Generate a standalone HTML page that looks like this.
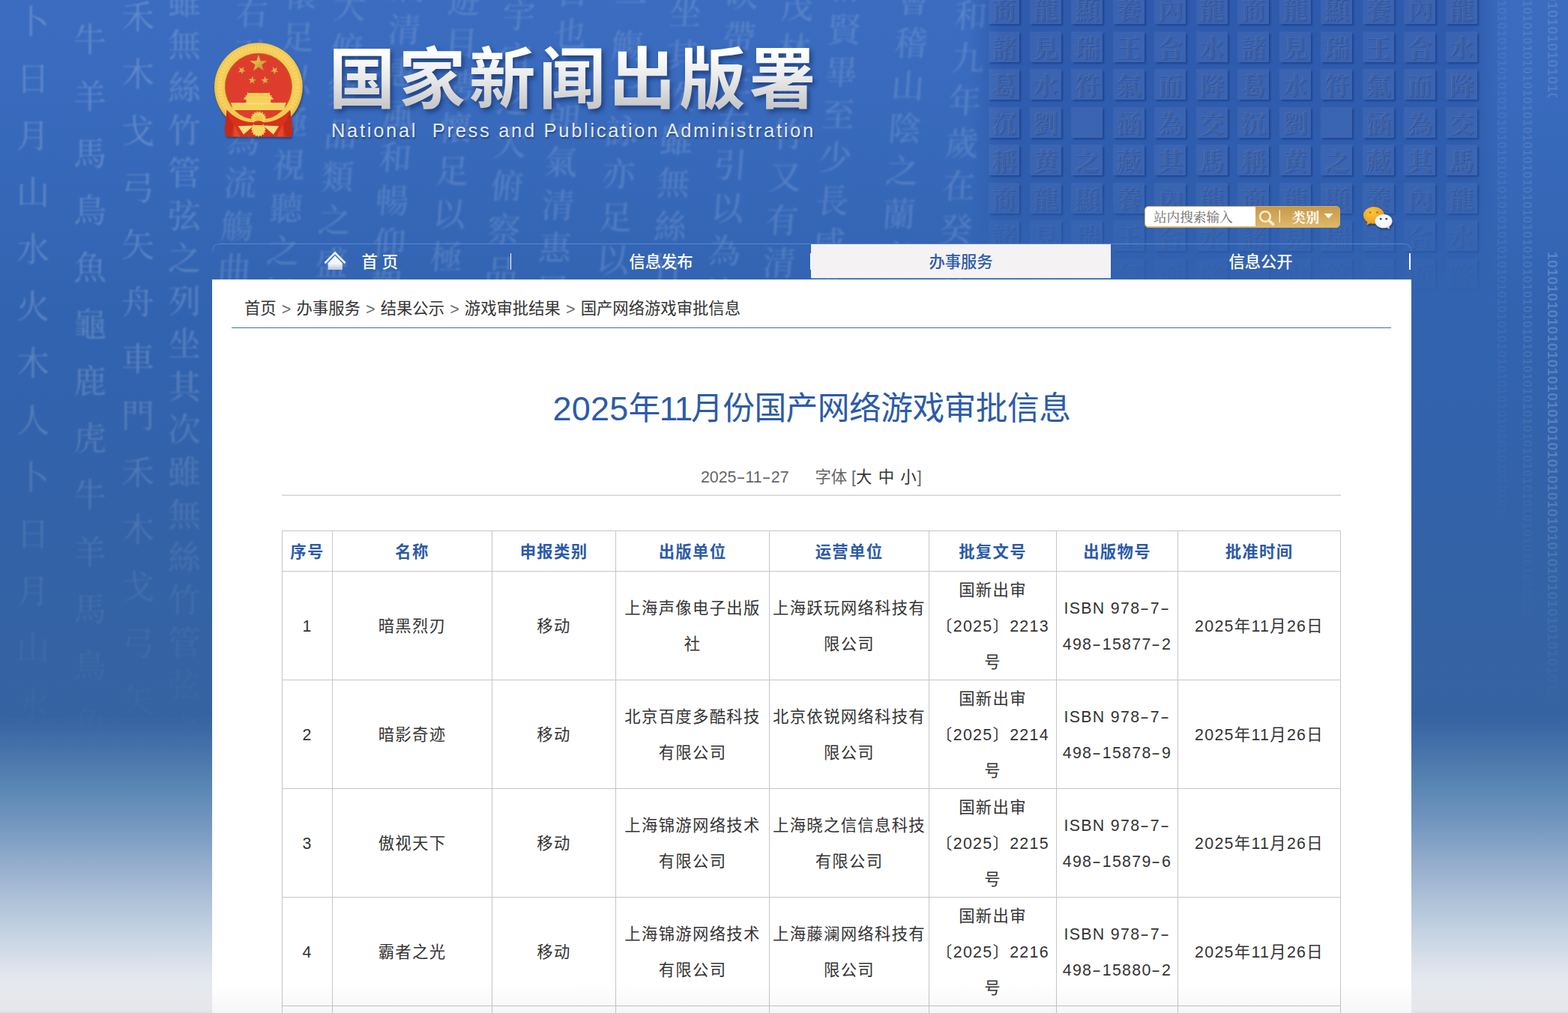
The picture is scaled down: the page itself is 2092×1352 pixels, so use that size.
<!DOCTYPE html>
<html lang="zh-CN">
<head>
<meta charset="utf-8">
<title>2025年11月份国产网络游戏审批信息</title>
<style>
*{box-sizing:border-box;margin:0;padding:0}
html,body{width:2092px;height:1352px;overflow:hidden}
body{position:relative;font-family:"Liberation Sans","Noto Sans CJK SC",sans-serif;color:#333;
background:linear-gradient(to bottom,#3b6cc0 0px,#3769bb 200px,#3263b0 420px,#3362a8 700px,#3563a2 955px,#4672aa 1000px,#5a86b3 1050px,#7497bf 1100px,#9cb3d0 1167px,#bfcfe0 1234px,#e2e6ee 1301px,#eeeff1 1348px,#e6e7ea 1352px);}
.abs{position:absolute}

/* decorative background */
#deco{left:0;top:0;width:2092px;height:1352px;overflow:hidden;pointer-events:none}
.cal{position:absolute;top:-6px;width:60px;writing-mode:vertical-rl;font-family:"Noto Serif CJK TC","Noto Serif CJK SC",serif;font-weight:500;font-size:44px;line-height:60px;letter-spacing:13px;color:rgba(255,255,255,.14);white-space:nowrap;filter:blur(1.1px);transform:skewX(-4deg)}
.orc{position:absolute;top:10px;width:60px;writing-mode:vertical-rl;font-family:"Noto Serif CJK TC","Noto Serif CJK SC",serif;font-weight:400;font-size:44px;line-height:60px;letter-spacing:32px;color:rgba(255,255,255,.2);white-space:nowrap;filter:blur(1px)}
#leftfade{left:0;top:0;width:283px;height:1100px;-webkit-mask-image:linear-gradient(to bottom,#000 0,#000 45%,rgba(0,0,0,.45) 70%,transparent 92%);mask-image:linear-gradient(to bottom,#000 0,#000 45%,rgba(0,0,0,.45) 70%,transparent 92%)}
#tiles{left:1319px;top:-8px;width:672px;height:410px;filter:blur(.7px);display:grid;grid-template-columns:repeat(12,41px);grid-auto-rows:40px;column-gap:14.5px;row-gap:10.5px;-webkit-mask-image:linear-gradient(to bottom,#000 0,#000 58%,rgba(0,0,0,.5) 78%,transparent 100%);mask-image:linear-gradient(to bottom,#000 0,#000 58%,rgba(0,0,0,.5) 78%,transparent 100%)}
#tiles b{display:block;background:rgba(255,255,255,.055);box-shadow:1.5px 2px 2px rgba(0,10,60,.28),-1px -1px 1px rgba(255,255,255,.05);font-family:"Noto Serif CJK TC","Noto Serif CJK SC",serif;font-weight:900;font-size:33px;line-height:38px;text-align:center;color:rgba(255,255,255,.075);overflow:hidden;text-shadow:1px 1px 1px rgba(0,10,60,.18)}
#tilebg{left:1295px;top:0;width:710px;height:400px;background:linear-gradient(to bottom,rgba(20,50,130,.3),rgba(20,50,130,.2) 60%,rgba(20,50,130,0));-webkit-mask-image:linear-gradient(to right,transparent 0,#000 6%,#000 94%,transparent 100%);mask-image:linear-gradient(to right,transparent 0,#000 6%,#000 94%,transparent 100%)}
.bin{position:absolute;overflow:hidden;height:20px;font-family:"Liberation Sans",sans-serif;font-weight:700;font-size:17px;line-height:20px;letter-spacing:.5px;color:rgba(255,255,255,.13);white-space:nowrap;transform-origin:0 0;transform:rotate(90deg)}
/* header */
#logo-cn{left:438.5px;top:39px;font-family:"Noto Sans CJK SC",sans-serif;font-weight:700;font-size:89px;letter-spacing:4.5px;line-height:120px;white-space:nowrap;color:#f0f0f0;
background:linear-gradient(to bottom,#ffffff 25%,#e9e9e9 55%,#c9c9c9 85%);-webkit-background-clip:text;background-clip:text;-webkit-text-fill-color:transparent;filter:drop-shadow(3px 4px 3px rgba(10,30,80,.55));}
#logo-en{left:442px;top:158px;font-size:25.5px;line-height:32px;white-space:nowrap;color:#e6eaf3;letter-spacing:2.7px;text-shadow:1px 2px 2px rgba(10,30,80,.5)}
/* search */
#search{left:1527px;top:275px;width:261px;height:29px;border-radius:5px;background:linear-gradient(to bottom,#c59a4a,#e0b868);border:1.5px solid #d9ae5c;overflow:hidden}
#search .inp{position:absolute;left:0;top:0;width:147px;height:26px;background:#fff;border-radius:4px 0 0 4px;font-family:"Liberation Serif","Noto Serif CJK SC",serif;font-size:17.6px;line-height:29px;color:#6a6a6a;padding-left:11px;white-space:nowrap}
#search .cat{position:absolute;left:195.5px;top:2px;font-size:18.4px;line-height:26px;color:#fff;font-family:"Liberation Serif","Noto Serif CJK SC",serif;font-weight:700}
/* nav */
#nav{left:283px;top:325px;width:1600px;height:16px;border-top:1.3px solid #5b88d0;border-radius:9px 9px 0 0;border-left:1.2px solid #5b88d0;border-right:1.2px solid #5b88d0;-webkit-mask-image:linear-gradient(to bottom,#000 35%,transparent 80%);mask-image:linear-gradient(to bottom,#000 35%,transparent 80%)}
.nv{position:absolute;top:326px;height:46px;width:400px;text-align:center;font-size:21.3px;font-weight:500;line-height:49px;color:#fff;white-space:nowrap}
.nv.act{background:#f5f2f4;color:#2d5ba5;border-bottom:1.3px solid #5b88d0}
.sep{position:absolute;top:338px;width:1.4px;height:22px;background:#fff}
/* content */
#main{left:283px;top:373px;width:1600px;height:979px;background:#fff}
#crumb{left:326px;top:392px;font-size:21.33px;line-height:40px;white-space:nowrap;color:#333}
#crumb span{margin:0 7.2px;color:#6a6a6a;position:relative;top:1px}
#crumbline{left:309px;top:436.6px;width:1547px;height:1.4px;background:#3f6db5}
#title{left:283px;width:1600px;top:510px;text-align:center;font-size:42.67px;line-height:70px;color:#2c5ba9;white-space:nowrap}
#title .d{font-size:45px;letter-spacing:.2px;position:relative;top:.5px}
#title .e{font-size:44px;letter-spacing:-1.2px;margin-right:-1px;margin-left:-1px;position:relative;top:.5px}
#title{letter-spacing:-.45px}
.meta{top:621px;font-size:21.33px;line-height:32px;color:#666;white-space:pre}
.meta b{font-weight:400;color:#333}
#hr{left:376px;top:660px;width:1413px;height:1.5px;background:#dcdcdc}
table{position:absolute;left:376px;top:708px;width:1413px;border-collapse:collapse;table-layout:fixed;font-size:21.33px;letter-spacing:1.33px;text-align:center}
td,th{border:1px solid #c6c6c6;line-height:48px;padding:0;vertical-align:middle;white-space:nowrap;color:#333;font-weight:400}
th{height:54px;color:#2b5aa8;font-weight:700;line-height:30px}
tr.r td{height:145px}
td i,th i{font-style:normal;display:block;position:relative;top:1px}
th i{top:1px}
.h{display:inline-block;transform:scaleX(1.7);margin:0 2.5px}
</style>
</head>
<body>
<div class="abs" id="deco">
<div class="cal" style="left:292px;top:-6px">右引以為流觴曲水</div>
<div class="cal" style="left:357px;top:-30px">懷足以極視聽之娛</div>
<div class="cal" style="left:422px;top:-14px">大俯察品類之盛所</div>
<div class="cal" style="left:499px;top:-40px">氣清惠風和暢仰觀</div>
<div class="cal" style="left:575px;top:-22px">遊目騁懷足以極視</div>
<div class="cal" style="left:648px;top:-2px">宇宙之大俯察品類</div>
<div class="cal" style="left:720px;top:-34px">日也天朗氣清惠風</div>
<div class="cal" style="left:797px;top:-18px">一觴一詠亦足以暢</div>
<div class="cal" style="left:870px;top:-6px">坐其次雖無絲竹管</div>
<div class="cal" style="left:946px;top:-30px">映帶左右引以為流</div>
<div class="cal" style="left:1019px;top:-14px">茂林脩竹又有清流</div>
<div class="cal" style="left:1086px;top:-40px">群賢畢至少長咸集</div>
<div class="cal" style="left:1175px;top:-22px">會稽山陰之蘭亭脩</div>
<div class="cal" style="left:1251px;top:-2px">和九年歲在癸丑暮</div>
<div class="abs" id="leftfade">
<div class="cal" style="left:216px;top:-20px;transform:none;color:rgba(255,255,255,.17)">雖無絲竹管弦之列坐其次雖無絲竹管弦之盛</div>
<div class="orc" style="left:14px;top:6px">卜日月山水火木人卜日月山水火</div>
<div class="orc" style="left:90px;top:30px">牛羊馬鳥魚龜鹿虎牛羊馬鳥魚龜</div>
<div class="orc" style="left:154px;top:0px">禾木戈弓矢舟車門禾木戈弓矢舟</div>
</div>
<div class="abs" id="tilebg"></div>
<div class="bin" style="left:2081px;top:336px;width:620px;font-size:19px;color:rgba(255,255,255,.2);-webkit-mask-image:linear-gradient(to right,#000 40%,transparent);mask-image:linear-gradient(to right,#000 40%,transparent)">101010101010101010101010101010101010101010101010101010101010101010101010101010101010101010101010101010101010101010101010</div>
<div class="bin" style="left:2081px;top:-20px;width:150px;font-size:19px;color:rgba(255,255,255,.14)">101010101010101010101010101010101010101010101010101010101010101010101010101010101010101010101010101010101010101010101010</div>
<div class="bin" style="left:2047px;top:-20px;width:900px;color:rgba(255,255,255,.1);-webkit-mask-image:linear-gradient(to right,#000 50%,transparent);mask-image:linear-gradient(to right,#000 50%,transparent)">101010101010101010101010101010101010101010101010101010101010101010101010101010101010101010101010101010101010101010101010</div>
<div class="bin" style="left:2013px;top:-20px;width:800px;color:rgba(255,255,255,.065);-webkit-mask-image:linear-gradient(to right,#000 50%,transparent);mask-image:linear-gradient(to right,#000 50%,transparent)">101010101010101010101010101010101010101010101010101010101010101010101010101010101010101010101010101010101010101010101010</div>
<div class="abs" id="tiles"><b>商</b><b>龍</b><b>顯</b><b>養</b><b>內</b><b>龍</b><b>商</b><b>龍</b><b>顯</b><b>養</b><b>內</b><b>龍</b><b>諸</b><b>見</b><b>瑞</b><b>王</b><b>合</b><b>水</b><b>諸</b><b>見</b><b>瑞</b><b>王</b><b>合</b><b>水</b><b>葛</b><b>水</b><b>符</b><b>氣</b><b>而</b><b>降</b><b>葛</b><b>水</b><b>符</b><b>氣</b><b>而</b><b>降</b><b>沉</b><b>劉</b><b>　</b><b>涵</b><b>為</b><b>交</b><b>沉</b><b>劉</b><b>　</b><b>涵</b><b>為</b><b>交</b><b>稱</b><b>黄</b><b>之</b><b>藏</b><b>其</b><b>馬</b><b>稱</b><b>黄</b><b>之</b><b>藏</b><b>其</b><b>馬</b><b>商</b><b>龍</b><b>顯</b><b>養</b><b>內</b><b>龍</b><b>商</b><b>龍</b><b>顯</b><b>養</b><b>內</b><b>龍</b><b>諸</b><b>見</b><b>瑞</b><b>王</b><b>合</b><b>水</b><b>諸</b><b>見</b><b>瑞</b><b>王</b><b>合</b><b>水</b><b>葛</b><b>水</b><b>符</b><b>氣</b><b>而</b><b>降</b><b>葛</b><b>水</b><b>符</b><b>氣</b><b>而</b><b>降</b></div>
</div>
<svg class="abs" id="emblem" style="left:275px;top:45px" width="140" height="150" viewBox="0 0 1262 1352">
<defs>
<radialGradient id="gold" cx="50%" cy="45%" r="55%"><stop offset="0" stop-color="#f6d060"/><stop offset=".8" stop-color="#f4cb52"/><stop offset=".93" stop-color="#f1c244"/><stop offset="1" stop-color="#dfa62e"/></radialGradient>
<linearGradient id="stg" x1="0" y1="0" x2="1" y2="1"><stop offset="0" stop-color="#f3d869"/><stop offset="1" stop-color="#b98d1f"/></linearGradient>
<filter id="esh" x="-20%" y="-20%" width="140%" height="140%"><feGaussianBlur in="SourceAlpha" stdDeviation="14"/><feOffset dx="6" dy="14"/><feComponentTransfer><feFuncA type="linear" slope=".4"/></feComponentTransfer><feMerge><feMergeNode/><feMergeNode in="SourceGraphic"/></feMerge></filter>
</defs>
<g filter="url(#esh)">
<circle cx="630" cy="640" r="530" fill="url(#gold)"/>
<circle cx="630" cy="640" r="470" fill="none" stroke="#f8dc7c" stroke-width="60" stroke-dasharray="26 14" opacity=".55"/>
<circle cx="630" cy="638" r="402" fill="#de3d2d" stroke="#b7791c" stroke-width="9"/>
<g fill="url(#stg)"><polygon points="630,252 654,327 733,327 669,373 693,447 630,401 567,447 591,373 527,327 606,327"/><polygon points="455,399 447,434 479,452 443,456 435,492 420,459 384,462 411,438 397,405 428,423"/><polygon points="800,399 827,423 858,405 844,438 871,462 835,459 820,492 812,456 776,452 808,434"/><polygon points="559,512 568,548 604,551 573,569 581,605 553,581 522,600 536,566 509,542 545,546"/><polygon points="706,512 720,546 756,542 729,566 743,600 712,581 684,605 692,569 661,551 697,548"/></g>
<g fill="#f6d25c">
<path d="M498 700 L505 712 L755 712 L762 700 L768 740 L812 786 L800 792 L460 792 L448 786 L492 740 Z"/>
<rect x="482" y="786" width="296" height="48"/>
<rect x="470" y="742" width="320" height="8" fill="#f0bf45"/>
<path d="M300 832 L960 832 L935 920 L325 920 Z"/>
</g>
<path d="M300 832 L960 832 L955 850 L305 850 Z" fill="#f8de80"/>
<path d="M262 905 C 350 985 470 1020 560 1022 L560 1070 C 450 1075 330 1040 240 960 Z M998 905 C 910 985 790 1020 700 1022 L700 1070 C 810 1075 930 1040 1020 960 Z" fill="#f3c84d"/>
<polygon points="730,1030 709,1044 724,1064 699,1070 707,1094 681,1091 680,1117 657,1105 647,1128 630,1110 613,1128 603,1105 580,1117 579,1091 553,1094 561,1070 536,1064 551,1044 530,1030 551,1016 536,996 561,990 553,966 579,969 580,943 603,955 613,932 630,950 647,932 657,955 680,943 681,969 707,966 699,990 724,996 709,1016" fill="#f5d35e" stroke="#d8a332" stroke-width="5"/>
<circle cx="630" cy="1035" r="52" fill="#f2c548"/>
<path d="M250 915 C 330 1010 470 1085 630 1062 C 790 1085 930 1010 1010 915 L1035 1150 L1022 1245 L845 1240 L415 1240 L238 1235 L225 1150 Z" fill="#d8331f"/>
<path d="M250 915 C 270 1000 300 1060 330 1090 L300 1235 L238 1235 L225 1150 Z M1010 915 C 990 1000 960 1060 930 1090 L960 1235 L1022 1245 L1035 1150 Z" fill="#c42a19"/>
<path d="M340 1100 L415 1240 L330 1238 Z M920 1100 L845 1240 L930 1238 Z" fill="#e4472f"/>
<path d="M385 1112 L575 1105 L450 1212 Z M875 1112 L685 1105 L810 1212 Z" fill="#f6df80"/>
<polygon points="722,1150 703,1164 715,1185 692,1191 695,1215 671,1212 665,1235 644,1223 630,1242 616,1223 595,1235 589,1212 565,1215 568,1191 545,1185 557,1164 538,1150 557,1136 545,1115 568,1109 565,1085 589,1088 595,1065 616,1077 630,1058 644,1077 665,1065 671,1088 695,1085 692,1109 715,1115 703,1136" fill="#f6d660"/>
<path d="M560 1075 C 600 1040 660 1040 700 1075 L 680 1100 L 580 1100 Z" fill="#d8331f"/>
</g>
</svg>
<div class="abs" id="logo-cn">国家新闻出版署</div>
<div class="abs" id="logo-en">National&nbsp; Press and Publication Administration</div>

<div class="abs" id="search"><div class="inp">站内搜索输入</div><div class="cat">类别</div></div>

<svg class="abs" style="left:1676px;top:277px" width="112" height="26" viewBox="0 0 112 26">
<circle cx="12" cy="12" r="6.8" fill="none" stroke="#f7ecd3" stroke-width="2.6"/>
<path d="M17.2 17.4 L22.6 22.4" stroke="#f7ecd3" stroke-width="3.8" stroke-linecap="round"/>
<rect x="30.6" y="3.5" width="1.4" height="16.5" fill="#fbf3df"/>
<path d="M90.5 8 L102.5 8 L96.5 14.6 Z" fill="#fff"/>
</svg>
<svg class="abs" style="left:1815px;top:272px" width="48" height="38" viewBox="0 0 48 38">
<defs>
<radialGradient id="wo" cx="40%" cy="30%" r="70%"><stop offset="0" stop-color="#ffc83a"/><stop offset="1" stop-color="#e9951b"/></radialGradient>
<radialGradient id="ww" cx="45%" cy="35%" r="70%"><stop offset="0" stop-color="#ffffff"/><stop offset=".7" stop-color="#f4f5f8"/><stop offset="1" stop-color="#c9ced8"/></radialGradient>
<filter id="wsh" x="-20%" y="-20%" width="150%" height="150%"><feGaussianBlur in="SourceAlpha" stdDeviation="1.2"/><feOffset dx="1" dy="1.5"/><feComponentTransfer><feFuncA type="linear" slope=".45"/></feComponentTransfer><feMerge><feMergeNode/><feMergeNode in="SourceGraphic"/></feMerge></filter>
</defs>
<g filter="url(#wsh)">
<path d="M18 4 C25.7 4 32 9 32 15.3 C32 21.6 25.7 26.6 18 26.6 C16.3 26.6 14.7 26.4 13.2 25.9 L8.2 28.6 L9.4 24.2 C6.1 22.1 4 18.9 4 15.3 C4 9 10.3 4 18 4 Z" fill="url(#wo)"/>
<circle cx="13" cy="11.5" r="1.5" fill="#c77a12"/><circle cx="22.5" cy="11.5" r="1.5" fill="#c77a12"/>
<path d="M31 14 C37.4 14 42.5 18.1 42.5 23.2 C42.5 26.1 40.8 28.7 38.2 30.4 L39.1 33.8 L35.2 31.7 C33.9 32.1 32.5 32.3 31 32.3 C24.6 32.3 19.5 28.2 19.5 23.2 C19.5 18.1 24.6 14 31 14 Z" fill="url(#ww)"/>
<circle cx="27.2" cy="20.2" r="1.4" fill="#3b4a78"/><circle cx="34.8" cy="20.2" r="1.4" fill="#3b4a78"/>
</g>
</svg>
<div class="abs" id="nav"></div>
<svg class="abs" style="left:431px;top:334px" width="32" height="28" viewBox="0 0 32 28">
<defs><linearGradient id="hg" x1="0" y1="0" x2="0" y2="1"><stop offset="0" stop-color="#ffffff"/><stop offset=".55" stop-color="#f4f6fa"/><stop offset="1" stop-color="#bcc4d2"/></linearGradient></defs>
<path d="M16 1.5 L30.5 16.2 L28.6 17.9 L16 5.2 L3.4 17.9 L1.5 16.2 Z" fill="#f4f7fc"/>
<path d="M16 7.2 L25.8 17.2 L25.8 26 L6.6 26 L6.6 17.2 Z" fill="url(#hg)"/>
</svg>
<div class="nv" style="left:283px"><span style="position:absolute;left:199.5px;top:0">首 页</span></div>
<div class="nv" style="left:682px">信息发布</div>
<div class="nv act" style="left:1082px">办事服务</div>
<div class="nv" style="left:1482px">信息公开</div>
<div class="sep" style="left:681px"></div>
<div class="sep" style="left:1080.5px"></div>
<div class="sep" style="left:1880px;width:2.4px"></div>

<div class="abs" id="main"></div>
<div class="abs" id="crumb">首页<span>&gt;</span>办事服务<span>&gt;</span>结果公示<span>&gt;</span>游戏审批结果<span>&gt;</span>国产网络游戏审批信息</div>
<div class="abs" id="crumbline"></div>
<div class="abs" id="title"><span class="d">2025</span>年<span class="e">11</span>月份国产网络游戏审批信息</div>
<div class="abs meta" style="left:935px">2025<span class="h">-</span>11<span class="h">-</span>27</div>
<div class="abs meta" style="left:1087.5px">字体 [<b style="letter-spacing:1.2px">大 中 小</b>]</div>
<div class="abs" id="hr"></div>

<table>
<colgroup><col style="width:67px"><col style="width:213px"><col style="width:165px"><col style="width:205px"><col style="width:213px"><col style="width:170px"><col style="width:162px"><col style="width:217px"></colgroup>
<tr><th><i>序号</i></th><th><i>名称</i></th><th><i>申报类别</i></th><th><i>出版单位</i></th><th><i>运营单位</i></th><th><i>批复文号</i></th><th><i>出版物号</i></th><th><i>批准时间</i></th></tr>
<tr class="r"><td><i>1</i></td><td><i>暗黑烈刃</i></td><td><i>移动</i></td><td><i>上海声像电子出版<br>社</i></td><td><i>上海跃玩网络科技有<br>限公司</i></td><td><i>国新出审<br>〔2025〕2213<br>号</i></td><td><i>ISBN 978<span class="h">-</span>7<span class="h">-</span><br>498<span class="h">-</span>15877<span class="h">-</span>2</i></td><td><i>2025年11月26日</i></td></tr>
<tr class="r"><td><i>2</i></td><td><i>暗影奇迹</i></td><td><i>移动</i></td><td><i>北京百度多酷科技<br>有限公司</i></td><td><i>北京依锐网络科技有<br>限公司</i></td><td><i>国新出审<br>〔2025〕2214<br>号</i></td><td><i>ISBN 978<span class="h">-</span>7<span class="h">-</span><br>498<span class="h">-</span>15878<span class="h">-</span>9</i></td><td><i>2025年11月26日</i></td></tr>
<tr class="r"><td><i>3</i></td><td><i>傲视天下</i></td><td><i>移动</i></td><td><i>上海锦游网络技术<br>有限公司</i></td><td><i>上海晓之信信息科技<br>有限公司</i></td><td><i>国新出审<br>〔2025〕2215<br>号</i></td><td><i>ISBN 978<span class="h">-</span>7<span class="h">-</span><br>498<span class="h">-</span>15879<span class="h">-</span>6</i></td><td><i>2025年11月26日</i></td></tr>
<tr class="r"><td><i>4</i></td><td><i>霸者之光</i></td><td><i>移动</i></td><td><i>上海锦游网络技术<br>有限公司</i></td><td><i>上海藤澜网络科技有<br>限公司</i></td><td><i>国新出审<br>〔2025〕2216<br>号</i></td><td><i>ISBN 978<span class="h">-</span>7<span class="h">-</span><br>498<span class="h">-</span>15880<span class="h">-</span>2</i></td><td><i>2025年11月26日</i></td></tr>
<tr class="r"><td><i>5</i></td><td><i></i></td><td><i></i></td><td><i></i></td><td><i></i></td><td><i></i></td><td><i></i></td><td><i></i></td></tr>
</table>
<div class="abs" style="left:0;top:1312px;width:2092px;height:40px;background:linear-gradient(to bottom,rgba(0,0,0,0),rgba(0,0,0,.035))"></div>
</body>
</html>
